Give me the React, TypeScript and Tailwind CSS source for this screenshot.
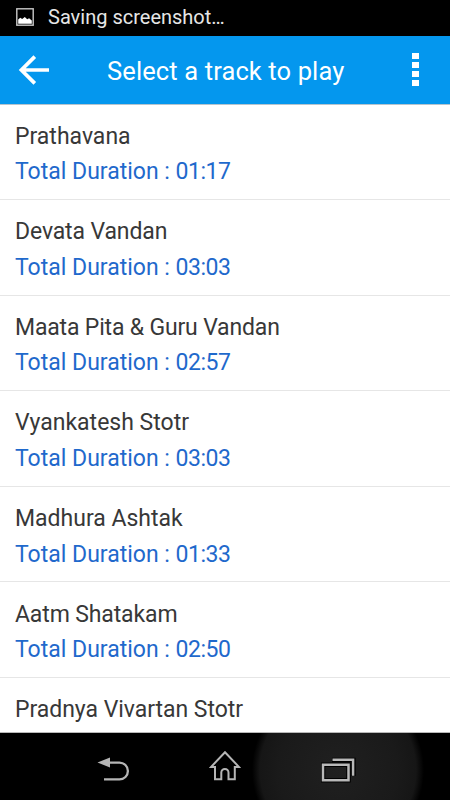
import { useState } from "react";

const tracks = [
  { name: "Prathavana", duration: "01:17", spacing: "tracking-[0px]" },
  { name: "Devata Vandan", duration: "03:03", spacing: "tracking-[-0.13px]" },
  { name: "Maata Pita & Guru Vandan", duration: "02:57", spacing: "tracking-[-0.17px]" },
  { name: "Vyankatesh Stotr", duration: "03:03", spacing: "tracking-[0px]" },
  { name: "Madhura Ashtak", duration: "01:33", spacing: "tracking-[0px]" },
  { name: "Aatm Shatakam", duration: "02:50", spacing: "tracking-[-0.13px]" },
  { name: "Pradnya Vivartan Stotr", duration: "", spacing: "tracking-[-0.04px]" },
];

const StatusBar = () => (
  <div className="flex h-[35.5px] shrink-0 items-center bg-black pb-0.5 pl-4">
    <svg width="18" height="18" viewBox="0 0 18 18" fill="none">
      <rect x="0.8" y="0.8" width="16.4" height="16.4" stroke="#c8c8c8" strokeWidth="1.4" />
      <path d="M2.2 15.7v-4.2l2-1.7 2 1.3 2.6-2.2 2.4 2.4 1.9-1 2.7 2.2v3.2z" fill="#fff" />
    </svg>
    <span className="ml-3.5 pt-px text-[20px] leading-[34px] text-[#e6e6e6]">Saving screenshot…</span>
  </div>
);

const Header = () => (
  <header className="flex h-[69px] shrink-0 items-center border-b border-[#b5c4ce] bg-[#0497ee]">
    <button className="ml-[18px] w-[89px]" aria-label="Back">
      <svg width="32" height="30" viewBox="0 0 32 30" fill="none" stroke="#fff" strokeWidth="3.7">
        <path d="M31 15H4M16.8 1.6L3.4 15l13.4 13.4" />
      </svg>
    </button>
    <h1 className="w-[305px] pt-[3px] text-[25.5px] leading-[62px] tracking-[0.12px] text-white">Select a track to play</h1>
    <button className="flex flex-col gap-[2.5px]" aria-label="More options">
      {[0, 1, 2, 3].map((dot) => (
        <span key={dot} className="h-[6.5px] w-[6.5px] bg-white" />
      ))}
    </button>
  </header>
);

const NavBar = () => (
  <nav className="h-[67px] shrink-0 bg-black">
    <div className="grid h-full grid-cols-[169px_112px_169px] bg-[radial-gradient(circle_at_338px_37px,#202020_0px,#1a1a1a_60px,#161616_78px,#000_86px)]">
      <button className="pl-[97px]" aria-label="Previous">
        <svg width="33" height="26" viewBox="0 0 33 26" fill="none" className="mt-1.5">
          <path d="M0.5 5.6L13 0.5v10z" fill="#b5b5b5" />
          <path d="M12 5.6h10.5a8.4 8.4 0 0 1 0 16.8H7" stroke="#b5b5b5" strokeWidth="2.3" />
        </svg>
      </button>
      <button className="flex items-center justify-center pb-0.5" aria-label="Home">
        <svg width="32" height="32" viewBox="0 0 32 32" fill="none" stroke="#b5b5b5" strokeWidth="2">
          <path d="M16 2.2L2 17h4v12.3h6.3v-6.8a3.6 3.6 0 0 1 7.2 0v6.8h6.3V17H30z" />
        </svg>
      </button>
      <button className="pl-10" aria-label="Recent apps">
        <svg width="36" height="26" viewBox="0 0 36 26" fill="none" className="mt-1.5">
          <path d="M11 3h21.4v16M2 7.8h25.5v15.4H2z" stroke="#000" strokeWidth="4.6" />
          <path d="M11.5 2.7h20.6v16M2 7.8h25.5v15.4H2z" stroke="#b8b8b8" strokeWidth="2.5" />
        </svg>
      </button>
    </div>
  </nav>
);

const App = () => {
  const [selected, setSelected] = useState<number | null>(null);

  return (
    <div className="flex h-[800px] w-[450px] flex-col overflow-hidden bg-white font-['Roboto',sans-serif]">
      <StatusBar />
      <Header />
      <ul className="min-h-0 flex-1 overflow-hidden border-b border-[#b8b8b8]">
        {tracks.map((track, index) => (
          <li
            key={track.name}
            aria-current={selected === index}
            onClick={() => setSelected(index)}
            className="h-[95.6px] border-b border-[#e6e6e6] pt-[14.2px] pl-[15px] text-[23px] leading-[35.6px]"
          >
            <p className={`text-[#383838] ${track.spacing}`}>{track.name}</p>
            {track.duration && (
              <p className="text-[#1f69cc]">
                Total Duration : <span className="tracking-[-0.5px]">{track.duration}</span>
              </p>
            )}
          </li>
        ))}
      </ul>
      <NavBar />
    </div>
  );
};

export default App;
